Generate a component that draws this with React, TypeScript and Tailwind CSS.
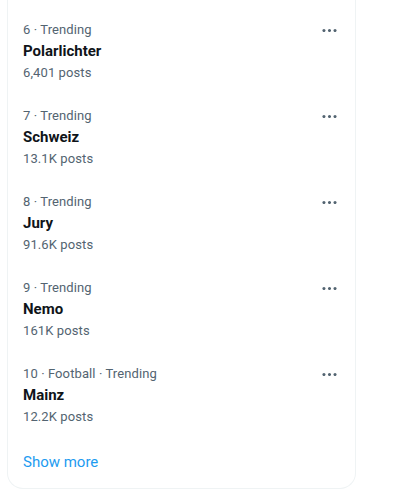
import React from "react";

const items = [
  { meta: "6 · Trending", title: "Polarlichter", posts: "6,401 posts" },
  { meta: "7 · Trending", title: "Schweiz", posts: "13.1K posts" },
  { meta: "8 · Trending", title: "Jury", posts: "91.6K posts" },
  { meta: "9 · Trending", title: "Nemo", posts: "161K posts" },
  { meta: "10 · Football · Trending", title: "Mainz", posts: "12.2K posts" },
];

function More() {
  return (
    <svg viewBox="0 0 24 24" width="19" height="19" fill="#536471" aria-hidden="true">
      <path d="M3 12c0-1.1.9-2 2-2s2 .9 2 2-.9 2-2 2-2-.9-2-2zm9 2c1.1 0 2-.9 2-2s-.9-2-2-2-2 .9-2 2 .9 2 2 2zm7 0c1.1 0 2-.9 2-2s-.9-2-2-2-2 .9-2 2 .9 2 2 2z" />
    </svg>
  );
}

export default function App() {
  return (
    <div
      className="w-[413px] h-[490px] bg-white overflow-hidden"
      style={{ fontFamily: "Roboto, 'Segoe UI', Arial, sans-serif" }}
    >
      <div className="ml-[7px] w-[349px] border-x border-b border-[#eff3f4] rounded-b-2xl pt-[10px]">
        {items.map((it) => (
          <div key={it.title} className="flex justify-between pl-[15px] pr-[16px] pt-3 pb-[15px]">
            <div className="flex flex-col">
              <div className="text-[13px] leading-4 text-[#536471] tracking-[0.1px]">{it.meta}</div>
              <div className="mt-[3px] text-[15px] leading-5 font-bold text-[#0f1419]">{it.title}</div>
              <div className="mt-1 text-[13px] leading-4 text-[#536471] tracking-[0.1px]">{it.posts}</div>
            </div>
            <div className="-mt-[1px] h-[19px]">
              <More />
            </div>
          </div>
        ))}
        <div className="px-[15px] pt-[12px] pb-[16px] text-[15px] leading-5 text-[#1d9bf0]">Show more</div>
      </div>
    </div>
  );
}
